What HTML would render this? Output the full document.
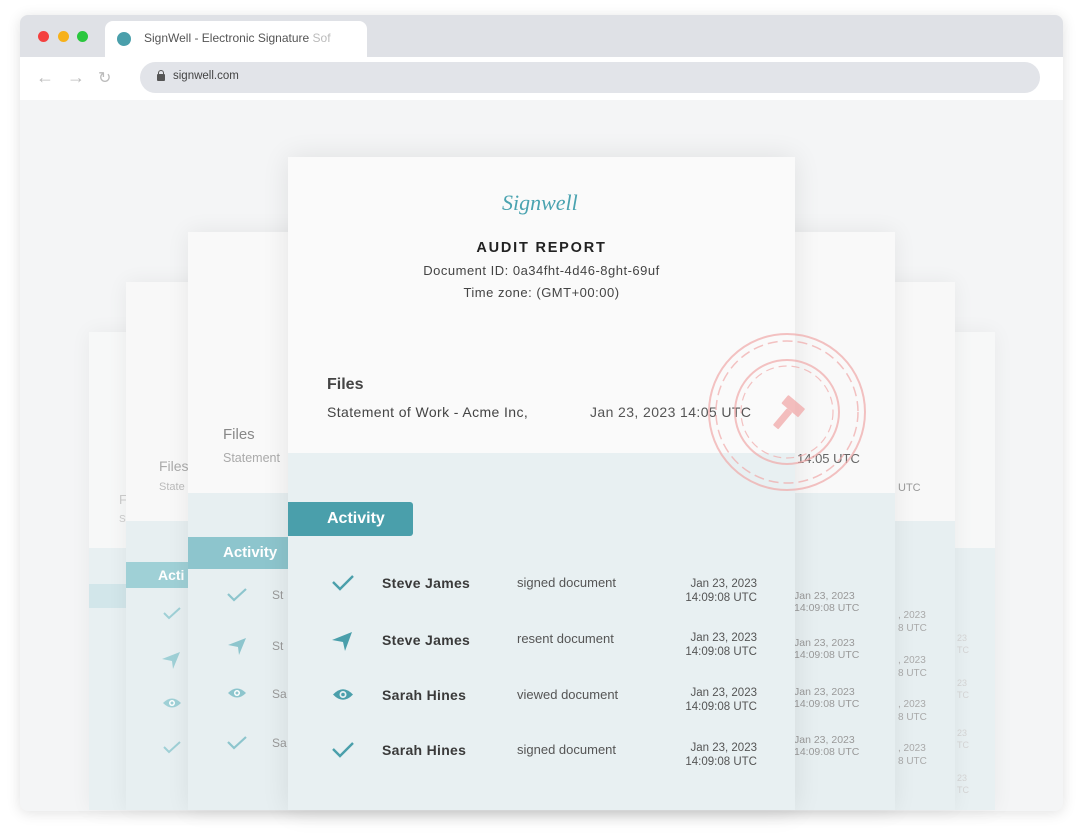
<!DOCTYPE html>
<html><head><meta charset="utf-8"><style>
*{margin:0;padding:0;box-sizing:border-box}
body{width:1085px;height:833px;background:#fff;font-family:"Liberation Sans",sans-serif;position:relative;overflow:hidden}
.a{position:absolute}
.t{position:absolute;white-space:nowrap}
</style></head><body>
<div class="a" style="left:20px;top:15px;width:1043px;height:796px;border-radius:8px;background:#f4f5f6;box-shadow:0 2px 14px rgba(0,0,0,.12);overflow:hidden">
  <div class="a" style="left:0;top:0;width:1043px;height:42px;background:#dfe1e6"></div>
  <div class="a" style="left:18px;top:16px;width:11px;height:11px;border-radius:50%;background:#f4403f"></div>
  <div class="a" style="left:38px;top:16px;width:11px;height:11px;border-radius:50%;background:#f7b11a"></div>
  <div class="a" style="left:57px;top:16px;width:11px;height:11px;border-radius:50%;background:#2ac73e"></div>
  <div class="a" style="left:85px;top:6px;width:262px;height:40px;border-radius:8px 8px 0 0;background:#fff"></div>
  <div class="a" style="left:97px;top:17px;width:14px;height:14px;border-radius:50%;background:#4a9fab"></div>
  <div class="t" style="left:124px;top:16px;font-size:12px;color:#555">SignWell - Electronic Signature <span style="color:#bbb">Sof</span></div>
  <div class="a" style="left:0;top:42px;width:1043px;height:43px;background:#fff"></div>
  <div class="t" style="left:16px;top:52px;font-size:18px;color:#bbb">←</div>
  <div class="t" style="left:47px;top:52px;font-size:18px;color:#bbb">→</div>
  <div class="t" style="left:78px;top:53px;font-size:16px;color:#bbb">↻</div>
  <div class="a" style="left:120px;top:47px;width:900px;height:31px;border-radius:16px;background:#e2e4e9"></div>
  <div class="a" style="left:137px;top:59px;width:8px;height:7px;background:#555;border-radius:1px"></div>
  <div class="a" style="left:138px;top:55px;width:6px;height:6px;border:1.5px solid #555;border-bottom:none;border-radius:3px 3px 0 0"></div>
  <div class="t" style="left:153px;top:55px;font-size:11.5px;color:#444">signwell.com</div>
</div>

<div class="a" style="left:89px;top:332px;width:906px;height:478px;background:#f7f8f8;box-shadow:0 0 20px rgba(0,0,0,.05)">
  <div class="a" style="left:0;top:216px;width:906px;height:262px;background:#e8f0f2"></div>
  <div class="a" style="left:0;top:252px;width:40px;height:24px;background:#d2e6ea"></div>
  <div class="t" style="left:30px;top:160px;font-size:13px;color:#ccc">F</div>
  <div class="t" style="left:30px;top:182px;font-size:10px;color:#ccc">St</div>
  <div class="t" style="left:868px;top:300px;font-size:9px;color:#d5d5d5;line-height:12px">23<br>TC</div>
  <div class="t" style="left:868px;top:345px;font-size:9px;color:#d5d5d5;line-height:12px">23<br>TC</div>
  <div class="t" style="left:868px;top:395px;font-size:9px;color:#d5d5d5;line-height:12px">23<br>TC</div>
  <div class="t" style="left:868px;top:440px;font-size:9px;color:#d5d5d5;line-height:12px">23<br>TC</div>
</div>
<div class="a" style="left:126px;top:282px;width:829px;height:528px;background:#f8f8f8;box-shadow:0 0 20px rgba(0,0,0,.06)">
  <div class="a" style="left:0;top:239px;width:829px;height:289px;background:#e7eff1"></div>
  <div class="a" style="left:0;top:280px;width:62px;height:26px;background:#9fd0d6"></div>
  <div class="t" style="left:32px;top:285px;font-size:14px;font-weight:bold;color:#fff">Acti</div>
  <div class="t" style="left:33px;top:176px;font-size:14px;color:#aaa">Files</div>
  <div class="t" style="left:33px;top:199px;font-size:11px;color:#bbb">State</div>
  <div class="t" style="left:772px;top:200px;font-size:11px;color:#999">UTC</div>
  <div class="t" style="left:772px;top:327px;font-size:10px;color:#aaa;line-height:13px">, 2023<br>8 UTC</div>
  <div class="t" style="left:772px;top:372px;font-size:10px;color:#aaa;line-height:13px">, 2023<br>8 UTC</div>
  <div class="t" style="left:772px;top:416px;font-size:10px;color:#aaa;line-height:13px">, 2023<br>8 UTC</div>
  <div class="t" style="left:772px;top:460px;font-size:10px;color:#aaa;line-height:13px">, 2023<br>8 UTC</div>
</div>
<svg class="a" style="left:162px;top:605px" width="20" height="16"><path d="M2 8 L7 13 L18 3" fill="none" stroke="#9fd0d6" stroke-width="2"/></svg>
<svg class="a" style="left:160px;top:650px" width="22" height="20"><path d="M2 9 L20 2 L13 19 L12 11 Z" fill="#9fd0d6"/></svg>
<svg class="a" style="left:162px;top:696px" width="20" height="14"><path d="M1 7 Q10 -2 19 7 Q10 16 1 7Z" fill="#9fd0d6"/><circle cx="10" cy="7" r="3" fill="#fff"/><circle cx="10" cy="7" r="1.5" fill="#9fd0d6"/></svg>
<svg class="a" style="left:162px;top:739px" width="20" height="16"><path d="M2 8 L7 13 L18 3" fill="none" stroke="#9fd0d6" stroke-width="2"/></svg>

<div class="a" style="left:188px;top:232px;width:707px;height:578px;background:#f9f9f9;box-shadow:0 0 22px rgba(0,0,0,.07)">
  <div class="a" style="left:0;top:261px;width:707px;height:317px;background:#e7eff1"></div>
  <div class="a" style="left:0;top:305px;width:100px;height:32px;background:#8dc5cd"></div>
  <div class="t" style="left:35px;top:312px;font-size:15px;font-weight:bold;color:#fff">Activity</div>
  <div class="t" style="left:35px;top:194px;font-size:15px;color:#888">Files</div>
  <div class="t" style="left:35px;top:219px;font-size:12.5px;color:#aaa">Statement</div>
  <div class="t" style="left:84px;top:356px;font-size:12px;color:#999">St</div>
  <div class="t" style="left:84px;top:407px;font-size:12px;color:#999">St</div>
  <div class="t" style="left:84px;top:455px;font-size:12px;color:#999">Sa</div>
  <div class="t" style="left:84px;top:504px;font-size:12px;color:#999">Sa</div>
  <div class="t" style="left:609px;top:219px;font-size:13px;color:#666">14:05 UTC</div>
  <div class="t" style="left:606px;top:358px;font-size:10.5px;color:#999;line-height:12px">Jan 23, 2023<br>14:09:08 UTC</div>
  <div class="t" style="left:606px;top:405px;font-size:10.5px;color:#999;line-height:12px">Jan 23, 2023<br>14:09:08 UTC</div>
  <div class="t" style="left:606px;top:454px;font-size:10.5px;color:#999;line-height:12px">Jan 23, 2023<br>14:09:08 UTC</div>
  <div class="t" style="left:606px;top:502px;font-size:10.5px;color:#999;line-height:12px">Jan 23, 2023<br>14:09:08 UTC</div>
</div>
<svg class="a" style="left:226px;top:586px" width="22" height="17"><path d="M2 8 L8 14 L20 3" fill="none" stroke="#8dc5cd" stroke-width="2.2"/></svg>
<svg class="a" style="left:226px;top:636px" width="22" height="20"><path d="M2 9 L20 2 L13 19 L12 11 Z" fill="#8dc5cd"/></svg>
<svg class="a" style="left:227px;top:686px" width="20" height="14"><path d="M1 7 Q10 -2 19 7 Q10 16 1 7Z" fill="#8dc5cd"/><circle cx="10" cy="7" r="3" fill="#fff"/><circle cx="10" cy="7" r="1.5" fill="#8dc5cd"/></svg>
<svg class="a" style="left:226px;top:734px" width="22" height="17"><path d="M2 8 L8 14 L20 3" fill="none" stroke="#8dc5cd" stroke-width="2.2"/></svg>

<div class="a" style="left:288px;top:157px;width:507px;height:653px;background:#fafafa;box-shadow:0 0 26px rgba(0,0,0,.09)">
  <div class="a" style="left:0;top:296px;width:507px;height:357px;background:#e8f0f2"></div>
  <div class="t" style="left:214px;top:33px;font-size:22px;font-style:italic;font-family:'Liberation Serif',serif;color:#4aa3b0">Signwell</div>
  <div class="t" style="left:0;width:507px;text-align:center;top:83px;font-size:14.5px;font-weight:bold;letter-spacing:1.8px;color:#222">AUDIT REPORT</div>
  <div class="t" style="left:0;width:507px;text-align:center;top:106px;font-size:13px;letter-spacing:.5px;color:#444">Document ID: 0a34fht-4d46-8ght-69uf</div>
  <div class="t" style="left:0;width:507px;text-align:center;top:128px;font-size:13px;letter-spacing:.5px;color:#444">Time zone: (GMT+00:00)</div>
  <div class="t" style="left:39px;top:219px;font-size:16px;font-weight:bold;color:#444">Files</div>
  <div class="t" style="left:39px;top:247px;font-size:14px;letter-spacing:.4px;color:#444">Statement of Work - Acme Inc,</div>
  <div class="t" style="left:302px;top:247px;font-size:14px;letter-spacing:.4px;color:#555">Jan 23, 2023 14:05 UTC</div>
  <div class="a" style="left:0;top:345px;width:125px;height:34px;background:#4a9fab;border-radius:0 3px 3px 0"></div>
  <div class="t" style="left:39px;top:353px;font-size:16px;font-weight:bold;color:#fff">Activity</div>
</div>
<svg class="a" style="left:331px;top:573px" width="24" height="19"><path d="M2 9 L9 16 L22 3" fill="none" stroke="#4a9fab" stroke-width="2.4"/></svg>
<svg class="a" style="left:331px;top:630px" width="22" height="22"><path d="M1 10 L21 2 L14 21 L12 12 Z" fill="#4a9fab"/></svg>
<svg class="a" style="left:332px;top:687px" width="22" height="15"><path d="M1 7.5 Q11 -3 21 7.5 Q11 18 1 7.5Z" fill="#4a9fab"/><circle cx="11" cy="7.5" r="3.5" fill="#e8f0f2"/><circle cx="11" cy="7.5" r="1.8" fill="#4a9fab"/></svg>
<svg class="a" style="left:331px;top:740px" width="24" height="19"><path d="M2 9 L9 16 L22 3" fill="none" stroke="#4a9fab" stroke-width="2.4"/></svg>
<div class="t" style="left:382px;top:575px;font-size:14px;font-weight:bold;letter-spacing:.3px;color:#3a3a3a">Steve James</div>
<div class="t" style="left:382px;top:632px;font-size:14px;font-weight:bold;letter-spacing:.3px;color:#3a3a3a">Steve James</div>
<div class="t" style="left:382px;top:687px;font-size:14px;font-weight:bold;letter-spacing:.3px;color:#3a3a3a">Sarah Hines</div>
<div class="t" style="left:382px;top:742px;font-size:14px;font-weight:bold;letter-spacing:.3px;color:#3a3a3a">Sarah Hines</div>
<div class="t" style="left:517px;top:575px;font-size:13px;color:#555">signed document</div>
<div class="t" style="left:517px;top:631px;font-size:13px;color:#555">resent document</div>
<div class="t" style="left:517px;top:687px;font-size:13px;color:#555">viewed document</div>
<div class="t" style="left:517px;top:742px;font-size:13px;color:#555">signed document</div>
<div class="t" style="left:657px;width:100px;text-align:right;top:577px;font-size:11.5px;color:#555;line-height:14px">Jan 23, 2023<br>14:09:08 UTC</div>
<div class="t" style="left:657px;width:100px;text-align:right;top:631px;font-size:11.5px;color:#555;line-height:14px">Jan 23, 2023<br>14:09:08 UTC</div>
<div class="t" style="left:657px;width:100px;text-align:right;top:686px;font-size:11.5px;color:#555;line-height:14px">Jan 23, 2023<br>14:09:08 UTC</div>
<div class="t" style="left:657px;width:100px;text-align:right;top:741px;font-size:11.5px;color:#555;line-height:14px">Jan 23, 2023<br>14:09:08 UTC</div>

<svg class="a" style="left:705px;top:330px" width="165" height="165">
  <g fill="none" stroke="#f0a8a8" stroke-opacity=".7">
    <circle cx="82" cy="82" r="78" stroke-width="2"/>
    <circle cx="82" cy="82" r="71" stroke-width="1.5" stroke-dasharray="10 5"/>
    <circle cx="82" cy="82" r="52" stroke-width="2"/>
    <circle cx="82" cy="82" r="46" stroke-width="1.2" stroke-dasharray="8 5"/>
  </g>
  <g fill="#f0a8a8" fill-opacity=".75" transform="rotate(40 82 82)">
    <rect x="72" y="68" width="22" height="11" rx="1"/>
    <rect x="79.5" y="79" width="7" height="22" rx="1"/>
  </g>
</svg>
</body></html>
